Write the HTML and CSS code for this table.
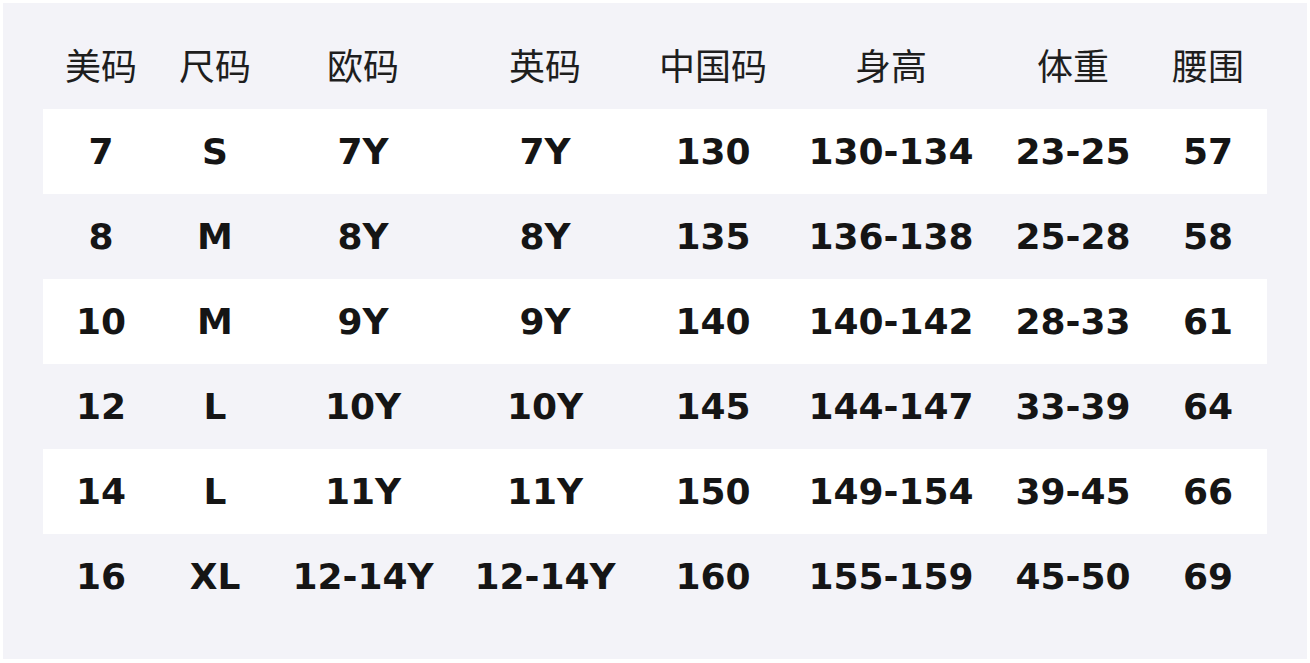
FILE: index.html
```html
<!DOCTYPE html>
<html lang="zh">
<head>
<meta charset="utf-8">
<title>尺码表</title>
<link rel="stylesheet" href="styles.css">
</head>
<body>
<div class="panel">
  <table class="size-table">
    <colgroup>
      <col class="c1"><col class="c2"><col class="c3"><col class="c4"><col class="c5"><col class="c6"><col class="c7"><col class="c8">
    </colgroup>
    <thead>
      <tr><th>美码</th><th>尺码</th><th>欧码</th><th>英码</th><th>中国码</th><th>身高</th><th>体重</th><th>腰围</th></tr>
    </thead>
    <tbody>
      <tr class="odd"><td>7</td><td>S</td><td>7Y</td><td>7Y</td><td>130</td><td>130-134</td><td>23-25</td><td>57</td></tr>
      <tr><td>8</td><td>M</td><td>8Y</td><td>8Y</td><td>135</td><td>136-138</td><td>25-28</td><td>58</td></tr>
      <tr class="odd"><td>10</td><td>M</td><td>9Y</td><td>9Y</td><td>140</td><td>140-142</td><td>28-33</td><td>61</td></tr>
      <tr><td>12</td><td>L</td><td>10Y</td><td>10Y</td><td>145</td><td>144-147</td><td>33-39</td><td>64</td></tr>
      <tr class="odd"><td>14</td><td>L</td><td>11Y</td><td>11Y</td><td>150</td><td>149-154</td><td>39-45</td><td>66</td></tr>
      <tr><td>16</td><td>XL</td><td>12-14Y</td><td>12-14Y</td><td>160</td><td>155-159</td><td>45-50</td><td>69</td></tr>
    </tbody>
  </table>
</div>
</body>
</html>
```

FILE: styles.css
```css
html, body {
  margin: 0;
  padding: 0;
  background: #ffffff;
}

.panel {
  box-sizing: border-box;
  width: 1304px;
  height: 656px;
  margin: 3px 0 0 3px;
  padding: 21px 40px 0 40px;
  background: #f3f3f8;
}

.size-table {
  width: 1224px;
  border-collapse: collapse;
  border-spacing: 0;
  table-layout: fixed;
}

.c1 { width: 116px; }
.c2 { width: 112px; }
.c3 { width: 184px; }
.c4 { width: 180px; }
.c5 { width: 156px; }
.c6 { width: 200px; }
.c7 { width: 164px; }
.c8 { width: 112px; }

.size-table th,
.size-table td {
  padding: 0;
  height: 85px;
  text-align: center;
  vertical-align: middle;
  white-space: nowrap;
}

.size-table th:last-child,
.size-table td:last-child {
  padding-right: 6px;
}

.size-table th {
  height: 79px;
  padding-bottom: 6px;
  font-family: "Noto Sans CJK SC", "Noto Sans", sans-serif;
  font-weight: 400;
  font-size: 36px;
  color: #1e1e1e;
}

.size-table td {
  font-family: "DejaVu Sans", "Noto Sans CJK SC", sans-serif;
  font-weight: 700;
  font-size: 36px;
  color: #151515;
}

.size-table tr.odd td {
  background: #ffffff;
}
```
